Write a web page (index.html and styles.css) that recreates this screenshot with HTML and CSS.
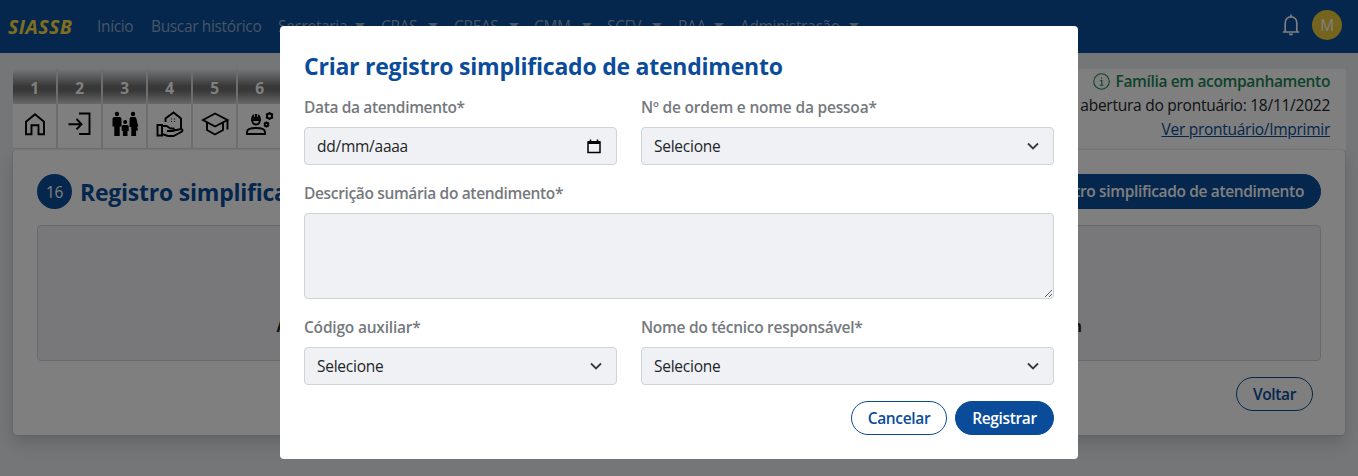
FILE: index.html
```html
<!DOCTYPE html>
<html lang="pt-BR">
<head>
<meta charset="utf-8">
<title>SIASSB</title>
<link rel="stylesheet" href="styles.css">
</head>
<body>
<nav class="navbar">
  <span class="brand">SIASSB</span>
  <div class="links">
    <span class="link w-inicio">Início</span>
    <span class="link w-buscar">Buscar histórico</span>
    <span class="link drop w-sec">Secretaria</span>
    <span class="link drop w-cras">CRAS</span>
    <span class="link drop w-creas">CREAS</span>
    <span class="link drop w-cmm">CMM</span>
    <span class="link drop w-scfv">SCFV</span>
    <span class="link drop w-paa">PAA</span>
    <span class="link drop w-adm">Administração</span>
  </div>
  <svg class="bell" viewBox="0 0 18 22"><path d="M.8 18h16.400M3.200 17.500V9C3.200 5.200 5.700 2.800 9 2.800s5.800 2.400 5.800 6.200v8.500M9 .5v2" fill="none" stroke="currentColor" stroke-width="1.700"/><path d="M6.800 19.500h4.400a2.200 2 0 0 1-4.400 0z" fill="currentColor"/></svg>
  <span class="avatar">M</span>
</nav>
<main class="page">
  <section class="steps">
    <div class="tabs">
      <div class="tab"><b>1</b><svg viewBox="0 0 32 32"><path d="M7 26.200V13.800L16 6.200l9 7.600v12.400h-5.500v-9h-7v9z"/></svg></div>
      <div class="tab"><b>2</b><svg viewBox="0 0 32 32"><path d="M15 5.500h10.500v20.500H15M4.500 16.200h13M12.500 11l5 5.200-5 5.200"/></svg></div>
      <div class="tab"><b>3</b><svg class="solid" viewBox="0 0 32 32"><circle cx="8" cy="6" r="2.200"/><path d="M5.500 9h5q2 0 2 2v7.500h-1.800V28H5.300v-9.500H3.500V11q0-2 2-2z"/><circle cx="24" cy="6" r="2.200"/><path d="M22.300 9h3.400q1.200 0 1.600 1.200l2 8.300h-1.200l1 4h-2V28h-4.800v-9h-1.800V15l.2-4.800q.4-1.200 1.600-1.200z"/><circle cx="16.200" cy="14" r="2"/><path d="M14.200 17h4q1.500 0 1.500 1.500V23h-1.200v5h-4.600v-5h-1.200v-4.500q0-1.500 1.500-1.500z"/></svg></div>
      <div class="tab"><b>4</b><svg viewBox="0 0 32 32"><path d="M11.500 14v-3.500L19.500 4.500l7.500 6v10.500M3.500 17h4.500v10.500H3.500zM8 18h4.500l4 2.500h3q1.500 2.500-1 2.500h-5.500M20 22.500l7-1.500q2.500.5 1 2.500L19.500 28H14l-6-2"/><path class="thin" d="M17 11h2M20 11h2M17 13.500h2M20 13.500h2"/></svg></div>
      <div class="tab"><b>5</b><svg viewBox="0 0 32 32"><path d="M4 12L16 5.500 28.500 12 16 18.500zM8 14.500v7.500l8 4.500 8-4.500v-7.500M28.500 12v9.500"/></svg></div>
      <div class="tab"><b>6</b><svg viewBox="0 0 32 32"><path d="M3 26v-2q0-4 9-4t9 4v2zM8.200 12q0 4.500 3.800 4.500t3.800-4.500"/><path class="fill" d="M7 13q0-6 3-6.700V9h.8V6h2.400v3h.8V6.300q3 .7 3 6.700z"/><circle cx="25.500" cy="8" r="2.500"/><circle cx="22.500" cy="16.500" r="1.700"/><path class="teeth" d="M25.500 4v1.500M25.500 10.500V12M21.900 5.900l1.400.8M27.700 9.300l1.400.8M21.900 10.100l1.400-.8M27.700 6.700l1.400-.8M22.500 13.500v1M22.500 18.500v1M19.900 15l1 .5M24.100 17.500l1 .5M19.900 18l1-.5M24.100 15.500l1-.5"/></svg></div>
    </div>
    <div class="status">
      <div class="family"><svg viewBox="0 0 16 16"><circle cx="8" cy="8" r="7.300"/><path d="M6.800 7h1.500v4.500M6.500 11.500h3.300M8 4.200v1.300"/></svg><strong>Família em acompanhamento</strong></div>
      <div class="opened">abertura do prontuário: 18/11/2022</div>
      <div class="print">Ver prontuário/Imprimir</div>
    </div>
  </section>
  <section class="card">
    <header class="card-head">
      <span class="num">16</span>
      <h1 class="heading">Registro simplificado</h1>
      <span class="btn primary create">Criar registro simplificado de atendimento</span>
    </header>
    <div class="empty"><p><span>A</span><span>m</span></p></div>
    <div class="card-foot"><span class="btn outline back">Voltar</span></div>
  </section>
</main>
<div class="backdrop">
  <form class="modal">
    <h2 class="title heading">Criar registro simplificado de atendimento</h2>
    <div class="grid">
      <label class="field"><span class="label">Data da atendimento*</span><span class="control"><span class="date">dd/mm/aaaa</span><svg class="calendar" viewBox="0 0 14 15"><path d="M1 3h12v10.500H1zM1 3.500h12M3.500.5V3M10.500.5V3" fill="none" stroke="currentColor" stroke-width="1.500"/><path d="M1 2h12v3H1z" fill="currentColor"/></svg></span></label>
      <label class="field"><span class="label l-pessoa">Nº de ordem e nome da pessoa*</span><span class="control"><span>Selecione</span><svg class="chevron" viewBox="0 0 16 16"><path d="M3 5.500l5 5 5-5"/></svg></span></label>
      <label class="field wide"><span class="label">Descrição sumária do atendimento*</span><textarea class="area"></textarea></label>
      <label class="field"><span class="label l-cod">Código auxiliar*</span><span class="control"><span>Selecione</span><svg class="chevron" viewBox="0 0 16 16"><path d="M3 5.500l5 5 5-5"/></svg></span></label>
      <label class="field"><span class="label l-nome">Nome do técnico responsável*</span><span class="control"><span>Selecione</span><svg class="chevron" viewBox="0 0 16 16"><path d="M3 5.500l5 5 5-5"/></svg></span></label>
    </div>
    <div class="actions"><span class="btn outline cancel">Cancelar</span><span class="btn primary save">Registrar</span></div>
  </form>
</div>
</body>
</html>
```
FILE: styles.css
```css
* { box-sizing: border-box; }
body { margin: 0; height: 476px; overflow: hidden; background: #eaecef; color: #212529; font: 15.5px/24px "Open Sans", "Noto Sans", sans-serif; letter-spacing: -.35px; }
h1, h2, p { margin: 0; }
.navbar { height: 53px; background: #0a4c9a; display: flex; align-items: center; padding: 0 16px 3px 8px; color: #fff; }
.brand { width: 82px; font-size: 19.5px; font-weight: 700; font-style: italic; letter-spacing: .45px; color: #fddc3e; padding-top: 3px; }
.links { display: flex; flex: 1; padding: 1px 0 0 7px; white-space: nowrap; color: #8cabd1; }
.link { flex: none; }
.drop { display: flex; align-items: center; justify-content: space-between; }
.drop::after { content: ""; border: 5px solid transparent; border-top-color: currentColor; border-bottom: 0; }
.w-inicio { width: 54px; }
.w-buscar { width: 127px; }
.w-sec { width: 87px; margin-right: 16px; }
.w-cras { width: 57px; margin-right: 16px; }
.w-creas { width: 65px; margin-right: 15px; }
.w-cmm { width: 58px; margin-right: 15px; }
.w-scfv { width: 55px; margin-right: 16px; }
.w-paa { width: 46px; margin-right: 16px; }
.w-adm { width: 119px; }
.bell { width: 18px; height: 22px; margin-right: 12px; }
.avatar { width: 30px; height: 30px; border-radius: 50%; background: #ebc838; text-align: center; line-height: 31px; }
.page { padding: 16px 13px; }
.steps { height: 81px; display: flex; justify-content: space-between; background: #fff; margin-right: -1px; }
.tabs { display: flex; }
.tab { width: 45px; border-right: 2px solid #d8dadd; border-bottom: 1px solid #d8dadd; height: 80px; display: flex; flex-direction: column; align-items: center; }
.tab b { width: 100%; height: 35px; text-align: center; color: #fff; line-height: 38px; background: linear-gradient(#eaecef 0, #707070 50%, #707070 62%, #d2d2d2); }
.tab svg { width: 32px; height: 32px; margin-top: 4px; fill: none; stroke: #000; stroke-width: 1.900; }
.tab .solid, .tab .fill { fill: #000; stroke: none; }
.tab .thin { stroke-width: 1.200; stroke-dasharray: 1; }
.tab .teeth { stroke-width: 1.500; }
.status { text-align: right; padding-right: 16px; white-space: nowrap; }
.family { display: flex; align-items: center; justify-content: flex-end; gap: 6px; color: #198754; height: 24px; }
.family svg { width: 17px; height: 17px; fill: none; stroke: currentColor; }
.family strong, .btn, .label { font-weight: 600; }
.opened { letter-spacing: -.25px; }
.print { color: #0a4c9a; text-decoration: underline; letter-spacing: -.28px; }
.card { height: 285px; background: #fff; border-radius: 4px; padding: 24px 24px 0; box-shadow: 0 8px 16px rgba(0,0,0,.15), 0 0 2px rgba(0,0,0,.2); }
.card-head { display: flex; align-items: center; height: 35px; }
.num { width: 35px; height: 35px; border-radius: 50%; background: #0a4c9a; color: #fff; text-align: center; line-height: 36px; margin-right: 8px; }
.heading { font-size: 23px; font-weight: 700; line-height: 32px; letter-spacing: -.23px; color: #0a4c9a; white-space: nowrap; }
.btn { border: 1px solid #0a4c9a; border-radius: 18px; height: 34px; line-height: 32px; text-align: center; white-space: nowrap; }
.primary { color: #fff; background: #0a4c9a; }
.outline { color: #0a4c9a; }
.create { margin-left: auto; padding: 0 16px; height: 35px; }
.empty { height: 136px; margin-top: 16px; background: #f0f1f4; border: 1px solid #ced4da; border-radius: 4px; display: flex; justify-content: center; align-items: flex-end; padding-bottom: 22px; font-weight: 700; }
.empty p { width: 805px; display: flex; justify-content: space-between; }
.card-foot { display: flex; justify-content: flex-end; padding: 16px 8px 0; }
.back { width: 77px; }
.backdrop { position: fixed; inset: 0; background: rgba(0,0,0,.5); display: flex; justify-content: center; align-items: flex-start; padding-top: 26px; }
.modal { width: 798px; height: 433px; background: #fff; border-radius: 4px; padding: 24px; }
.title { margin-bottom: 14px; }
.grid { display: grid; grid-template-columns: 313px 413px; column-gap: 24px; row-gap: 17px; }
.field { display: flex; flex-direction: column; color: #75797d; }
.wide { grid-column: 1 / 3; }
.label { height: 23px; line-height: 22px; margin-bottom: 8px; white-space: nowrap; }
.l-pessoa { letter-spacing: -.2px; }
.l-cod { letter-spacing: -.2px; }
.l-nome { letter-spacing: -.28px; }
.control { height: 38px; border: 1px solid #ced4da; border-radius: 4px; background: #f0f1f4; padding: 0 12px; display: flex; align-items: center; justify-content: space-between; color: #212529; letter-spacing: -.25px; }
.chevron { width: 16px; height: 16px; fill: none; stroke: #343a40; stroke-width: 1.800; }
.calendar { width: 14px; height: 15px; margin-right: 3px; color: #000; }
.area { display: block; width: 750px; height: 86px; border: 1px solid #ced4da; border-radius: 4px; background: #f0f1f4; resize: vertical; margin: 0; }
.actions { display: flex; justify-content: flex-end; gap: 8px; margin-top: 16px; }
.cancel { width: 96px; }
.save { width: 99px; }
```
